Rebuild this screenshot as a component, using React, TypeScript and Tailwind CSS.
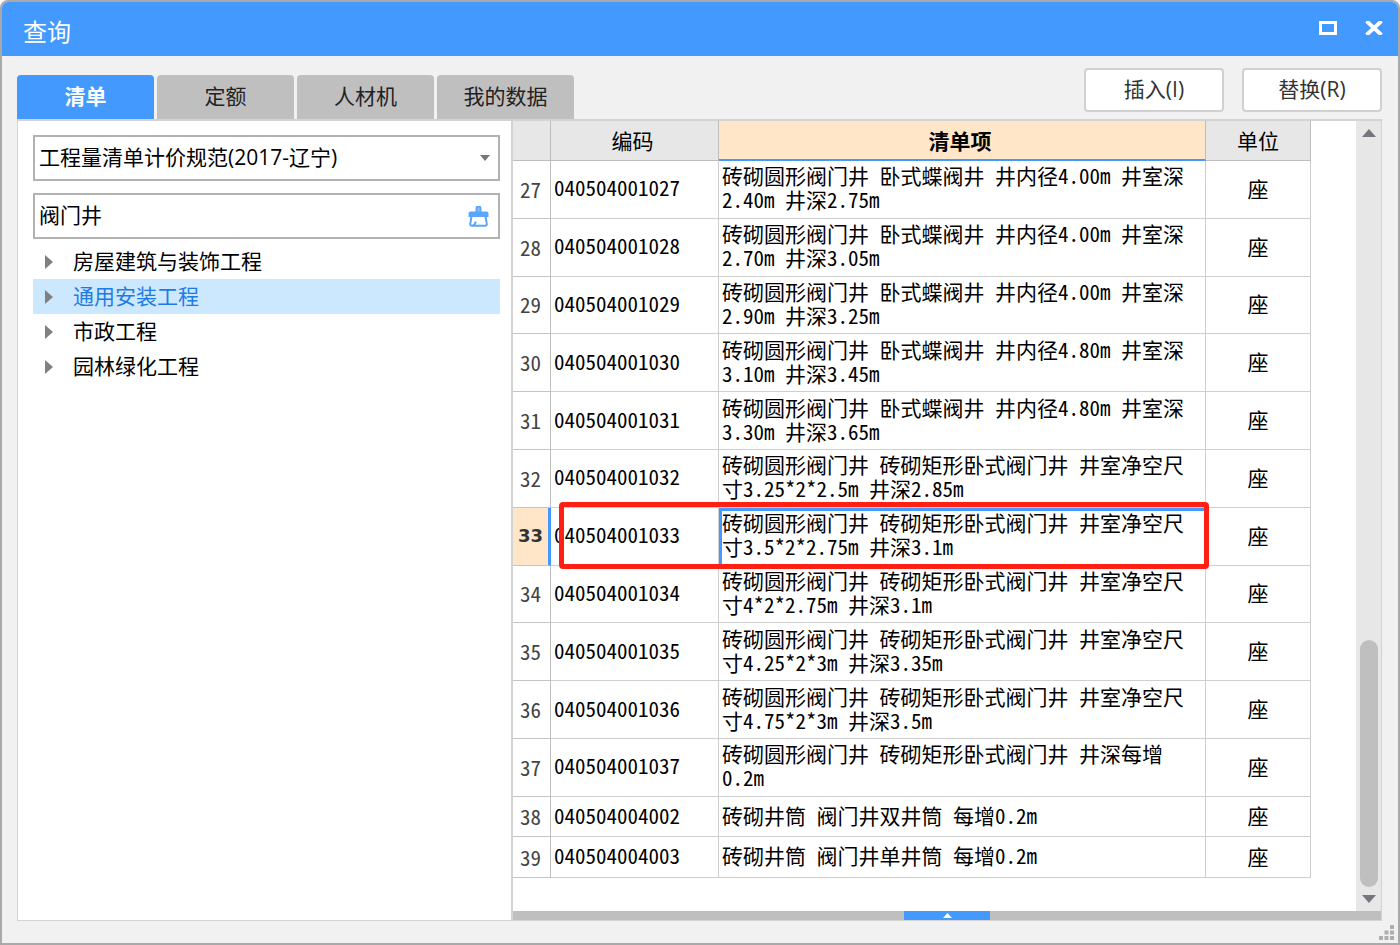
import { useState } from 'react';
import clsx from 'clsx';

const TABS = ['清单', '定额', '人材机', '我的数据'];

const TREE = ['房屋建筑与装饰工程', '通用安装工程', '市政工程', '园林绿化工程'];

const ROWS = [
  { no: 27, code: '040504001027', name: '砖砌圆形阀门井 卧式蝶阀井 井内径4.00m 井室深2.40m 井深2.75m' },
  { no: 28, code: '040504001028', name: '砖砌圆形阀门井 卧式蝶阀井 井内径4.00m 井室深2.70m 井深3.05m' },
  { no: 29, code: '040504001029', name: '砖砌圆形阀门井 卧式蝶阀井 井内径4.00m 井室深2.90m 井深3.25m' },
  { no: 30, code: '040504001030', name: '砖砌圆形阀门井 卧式蝶阀井 井内径4.80m 井室深3.10m 井深3.45m' },
  { no: 31, code: '040504001031', name: '砖砌圆形阀门井 卧式蝶阀井 井内径4.80m 井室深3.30m 井深3.65m' },
  { no: 32, code: '040504001032', name: '砖砌圆形阀门井 砖砌矩形卧式阀门井 井室净空尺寸3.25*2*2.5m 井深2.85m' },
  { no: 33, code: '040504001033', name: '砖砌圆形阀门井 砖砌矩形卧式阀门井 井室净空尺寸3.5*2*2.75m 井深3.1m' },
  { no: 34, code: '040504001034', name: '砖砌圆形阀门井 砖砌矩形卧式阀门井 井室净空尺寸4*2*2.75m 井深3.1m' },
  { no: 35, code: '040504001035', name: '砖砌圆形阀门井 砖砌矩形卧式阀门井 井室净空尺寸4.25*2*3m 井深3.35m' },
  { no: 36, code: '040504001036', name: '砖砌圆形阀门井 砖砌矩形卧式阀门井 井室净空尺寸4.75*2*3m 井深3.5m' },
  { no: 37, code: '040504001037', name: '砖砌圆形阀门井 砖砌矩形卧式阀门井 井深每增0.2m' },
  { no: 38, code: '040504004002', name: '砖砌井筒 阀门井双井筒 每增0.2m' },
  { no: 39, code: '040504004003', name: '砖砌井筒 阀门井单井筒 每增0.2m' },
];

function BroomIcon() {
  return (
    <svg width="21" height="21" viewBox="0 0 21 21" fill="none" stroke="#5ba5ff" strokeWidth="2">
      <path d="M8.5 6V2.5a2 2 0 0 1 4 0V6" fill="#8cc0ff" />
      <path d="M1.5 10V7.5q0-1 1-1h16q1 0 1 1V10z" fill="#5ba5ff" />
      <path d="M3.5 10.5 2.2 18q0 1.8 1.5 1.8h13.600q1.500 0 1.500-1.800l-1.300-7.500" />
      <path d="M7.5 15.5q0 3-2.5 4" />
    </svg>
  );
}

export default function App() {
  const [tab, setTab] = useState('清单');
  const [node, setNode] = useState('通用安装工程');
  const [current, setCurrent] = useState(33);
  const [keyword, setKeyword] = useState('阀门井');

  return (
    <div className="flex h-screen flex-col overflow-hidden rounded-t-lg border-2 border-[#a9a9a9] bg-[#f1f1f1] font-['Open_Sans','Noto_Sans_CJK_SC',sans-serif] text-[21px] text-black">
      <header className="flex h-[54px] shrink-0 items-center justify-between bg-[#4499ff] pl-[21px] pr-[15px] text-white">
        <h1 className="pt-[6px] text-2xl">查询</h1>
        <div className="flex items-center gap-7 pb-[2px]">
          <button type="button" aria-label="最大化">
            <svg width="18" height="14" viewBox="0 0 18 14" className="block">
              <rect x="1.5" y="1.5" width="15" height="11" fill="none" stroke="#fff" strokeWidth="3" />
            </svg>
          </button>
          <button type="button" aria-label="关闭">
            <svg width="18" height="14" viewBox="0 0 18 14" className="block">
              <path d="M1.500 0l15 14M16.500 0l-15 14" stroke="#fff" strokeWidth="3.8" />
            </svg>
          </button>
        </div>
      </header>

      <div className="flex shrink-0 items-end justify-between pl-[15px] pr-4 pt-3">
        <div className="flex gap-[3px]" role="tablist">
          {TABS.map((t) => (
            <button
              key={t}
              type="button"
              role="tab"
              aria-selected={t === tab}
              onClick={() => setTab(t)}
              className={clsx(
                'h-11 w-[137px] rounded-t-sm',
                t === tab ? 'bg-[#4499ff] font-bold text-white' : 'bg-[#bfbfbf] text-[#222]'
              )}
            >
              {t}
            </button>
          ))}
        </div>
        <div className="flex gap-[18px] pb-[7px]">
          <button type="button" className="h-11 w-[140px] rounded border-2 border-[#d0d0d0] bg-white text-[#333]">
            插入(I)
          </button>
          <button type="button" className="h-11 w-[140px] rounded border-2 border-[#d0d0d0] bg-white text-[#333]">
            替换(R)
          </button>
        </div>
      </div>

      <main className="ml-[15px] mr-4 flex min-h-0 flex-1 border border-t-2 border-[#d3d3d3] bg-white">
        <aside className="flex w-[495px] shrink-0 flex-col border-r-2 border-[#d3d3d3] pl-[15px] pr-[11px] pt-[14px]">
          <div className="relative">
            <select
              aria-label="清单规范"
              className="h-[46px] w-full appearance-none rounded-none border-2 border-[#b2b2b2] bg-white pl-1 outline-none"
            >
              <option>工程量清单计价规范(2017-辽宁)</option>
            </select>
            <svg width="10" height="6" viewBox="0 0 10 6" className="pointer-events-none absolute right-[10px] top-5">
              <path d="M0 0h10L5 6z" fill="#777" />
            </svg>
          </div>
          <div className="mt-3 flex h-[46px] items-center border-2 border-[#b2b2b2] pl-1 pr-[9px]">
            <input
              aria-label="搜索"
              value={keyword}
              onChange={(e) => setKeyword(e.target.value)}
              className="min-w-0 flex-1 outline-none"
            />
            <button type="button" aria-label="清空" onClick={() => setKeyword('')}>
              <BroomIcon />
            </button>
          </div>
          <ul className="mt-[5px]">
            {TREE.map((t) => (
              <li key={t}>
                <button
                  type="button"
                  onClick={() => setNode(t)}
                  className={clsx(
                    'flex h-[35px] w-full items-center gap-5 pl-3 text-left',
                    t === node && 'bg-[#cce8ff] text-[#1e7be6]'
                  )}
                >
                  <svg width="8" height="14" viewBox="0 0 8 14">
                    <path d="M0 0l8 7-8 7z" fill="#808080" />
                  </svg>
                  {t}
                </button>
              </li>
            ))}
          </ul>
        </aside>

        <section className="flex min-w-0 flex-1 flex-col">
          <div className="flex min-h-0 flex-1">
            <div className="min-w-0 flex-1 pb-[33px] pr-[45px]">
              <table className="h-full w-full table-fixed border-separate border-spacing-0 font-['Noto_Sans_Mono_CJK_SC','Noto_Sans_CJK_SC',sans-serif] leading-6">
                <colgroup>
                  <col className="w-[38px]" />
                  <col className="w-[168px]" />
                  <col />
                  <col className="w-[105px]" />
                </colgroup>
                <thead>
                  <tr className="h-10 bg-[#e7e7e7]">
                    <th className="border-b border-r border-[#bdbdbd]" />
                    <th className="border-b border-r border-[#bdbdbd] pb-[2px] pr-1 font-normal">编码</th>
                    <th className="border-b-2 border-r border-b-[#4499ff] border-r-[#bdbdbd] bg-[#ffe6c8] pr-1 font-bold">
                      清单项
                    </th>
                    <th className="border-b border-r border-[#bdbdbd] pb-[2px] font-normal">单位</th>
                  </tr>
                </thead>
                <tbody>
                  {ROWS.map((r) => {
                    const active = r.no === current;
                    return (
                      <tr key={r.no} onClick={() => setCurrent(r.no)} className="h-10">
                        <th
                          className={clsx(
                            'border-b border-b-[#c4c4c4]',
                            active
                              ? "border-r-3 border-r-[#4499ff] bg-[#ffe6c8] font-['DejaVu_Sans',sans-serif] text-lg font-bold text-[#333]"
                              : 'border-r border-r-[#bdbdbd] pb-px pr-[2px] font-normal text-[#444]'
                          )}
                        >
                          {r.no}
                        </th>
                        <td className="border-b border-r border-[#cfcfcf] pb-1 pl-[3px]">{r.code}</td>
                        <td className="relative border-b border-r border-[#cfcfcf] pb-[6px] pl-[3px] pr-4 pt-[2px]">
                          {r.name}
                          {active && (
                            <>
                              <span className="pointer-events-none absolute inset-0 border border-l-3 border-t-3 border-[#4499ff]" />
                              <span className="pointer-events-none absolute -bottom-1 -left-40 -right-1 -top-1.5 z-10 rounded border-5 border-[#ff2013]" />
                            </>
                          )}
                        </td>
                        <td className="border-b border-r border-[#cfcfcf] pb-[3px] text-center">座</td>
                      </tr>
                    );
                  })}
                </tbody>
              </table>
            </div>
            <div className="flex w-[25px] shrink-0 flex-col items-center bg-[#e7e7e7] py-2">
              <svg width="14" height="8" viewBox="0 0 14 8">
                <path d="M7 0l7 8H0z" fill="#76767e" />
              </svg>
              <div className="flex-[503]" />
              <div className="w-[18px] flex-[247] rounded-full bg-[#bfbfbf]" />
              <svg width="14" height="8" viewBox="0 0 14 8" className="mt-2">
                <path d="M0 0h14L7 8z" fill="#76767e" />
              </svg>
            </div>
          </div>
          <div className="flex h-[9px] shrink-0 justify-center bg-[#bfbfbf]">
            <button type="button" aria-label="展开" className="flex w-[86px] items-center justify-center bg-[#4499ff]">
              <svg width="9" height="5" viewBox="0 0 9 5">
                <path d="M4.5 0L9 5H0z" fill="#fff" />
              </svg>
            </button>
          </div>
        </section>
      </main>

      <footer className="flex h-[22px] shrink-0 items-end justify-end pb-[3px] pr-1">
        <svg width="15" height="15" viewBox="0 0 15 15" fill="#aeaeae">
          <path d="M11 0h4v4h-4zM5.5 5.5h4v4h-4zM11 5.5h4v4h-4zM0 11h4v4H0zM5.5 11h4v4h-4zM11 11h4v4h-4z" />
        </svg>
      </footer>
    </div>
  );
}
